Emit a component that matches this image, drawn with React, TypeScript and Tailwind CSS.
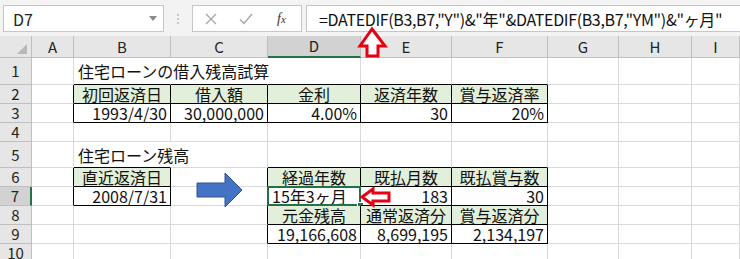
import React from "react";

const font = "font-[family-name:'Noto_Sans_CJK_JP',sans-serif]";

type Cell = { text: string; align?: "left" | "right" | "center"; fill?: boolean };

const cells: Record<string, Cell> = {
  "1,2": { text: "住宅ローンの借入残高試算", align: "left" },
  "2,2": { text: "初回返済日", align: "center", fill: true },
  "2,3": { text: "借入額", align: "center", fill: true },
  "2,4": { text: "金利", align: "center", fill: true },
  "2,5": { text: "返済年数", align: "center", fill: true },
  "2,6": { text: "賞与返済率", align: "center", fill: true },
  "3,2": { text: "1993/4/30", align: "right" },
  "3,3": { text: "30,000,000", align: "right" },
  "3,4": { text: "4.00%", align: "right" },
  "3,5": { text: "30", align: "right" },
  "3,6": { text: "20%", align: "right" },
  "5,2": { text: "住宅ローン残高", align: "left" },
  "6,2": { text: "直近返済日", align: "center", fill: true },
  "7,2": { text: "2008/7/31", align: "right" },
  "6,4": { text: "経過年数", align: "center", fill: true },
  "6,5": { text: "既払月数", align: "center", fill: true },
  "6,6": { text: "既払賞与数", align: "center", fill: true },
  "7,4": { text: "15年3ヶ月", align: "left" },
  "7,5": { text: "183", align: "right" },
  "7,6": { text: "30", align: "right" },
  "8,4": { text: "元金残高", align: "center", fill: true },
  "8,5": { text: "通常返済分", align: "center", fill: true },
  "8,6": { text: "賞与返済分", align: "center", fill: true },
  "9,4": { text: "19,166,608", align: "right" },
  "9,5": { text: "8,699,195", align: "right" },
  "9,6": { text: "2,134,197", align: "right" },
};

// cells that carry a black "all borders" box
const boxed = (r: number, c: number) =>
  (r >= 2 && r <= 3 && c >= 2 && c <= 6) ||
  (r >= 6 && r <= 7 && c === 2) ||
  (r >= 6 && r <= 9 && c >= 4 && c <= 6);

// text that spills over into the next column hides the gridline
const spill = (r: number, c: number) => (r === 1 && (c === 2 || c === 3)) || (r === 5 && c === 2);

const colLetters = ["A", "B", "C", "D", "E", "F", "G", "H", "I"];
const rows = [1, 2, 3, 4, 5, 6, 7, 8, 9, 10];

const gridCols = "grid grid-cols-[32px_42px_97px_97px_93px_91px_96px_71px_73px_1fr]";

function FormulaBar() {
  return (
    <div className="h-[36px] bg-[#f3f3f3] flex items-start pt-[5px] pl-[3px] gap-0">
      <div className="w-[161px] h-[27px] bg-white border border-[#c6c6c6] flex items-center pl-[9px] pr-[6px]">
        <span className={`${font} text-[16px] leading-[18px] text-[#222] flex-1`}>D7</span>
        <svg width="8" height="5" viewBox="0 0 8 5">
          <path d="M0 0 L8 0 L4 5 Z" fill="#8a8a8a" />
        </svg>
      </div>
      <div className="w-[28px] h-[27px] flex flex-col items-center justify-center gap-[2px]">
        <div className="w-[2px] h-[2px] bg-[#c8c8c8]" />
        <div className="w-[2px] h-[2px] bg-[#c8c8c8]" />
        <div className="w-[2px] h-[2px] bg-[#c8c8c8]" />
      </div>
      <div className="w-[110px] h-[27px] bg-white border border-[#c6c6c6] flex items-center">
        <svg width="12" height="12" viewBox="0 0 12 12" className="ml-[12px]">
          <path d="M1 1 L11 11 M11 1 L1 11" stroke="#a6a6a6" strokeWidth="1.3" />
        </svg>
        <svg width="14" height="12" viewBox="0 0 14 12" className="ml-[22px]">
          <path d="M1 6.5 L5 10.5 L13 1" stroke="#a6a6a6" strokeWidth="1.4" fill="none" />
        </svg>
        <span className="ml-[24px] font-[family-name:'Liberation_Serif',serif] italic text-[14px] text-[#333] leading-none">
          f<span className="text-[11px]">x</span>
        </span>
      </div>
      <div className="ml-[4px] flex-1 h-[27px] bg-white border border-[#c6c6c6] border-r-0 flex items-center pl-[12px]">
        <span className={`${font} text-[16px] leading-[18px] tracking-[-0.35px] text-[#111] whitespace-nowrap`}>
          {'=DATEDIF(B3,B7,"Y")&"年"&DATEDIF(B3,B7,"YM")&"ヶ月"'}
        </span>
      </div>
    </div>
  );
}

function HeaderRow() {
  return (
    <div className={`${gridCols} h-[22px] bg-[#e6e6e6]`}>
      <div className="border-r border-b border-[#bfbfbf] relative">
        <svg width="10" height="10" viewBox="0 0 10 10" className="absolute right-[4px] bottom-[3px]">
          <path d="M10 0 L10 10 L0 10 Z" fill="#b8b8b8" />
        </svg>
      </div>
      {colLetters.map((l) => (
        <div
          key={l}
          className={
            l === "D"
              ? `bg-[#d2d2d2] border-r border-[#bfbfbf] border-b-2 border-b-[#217346] flex items-center justify-center ${font} text-[15px] leading-[18px] text-[#222]`
              : `border-r border-b border-[#bfbfbf] flex items-center justify-center ${font} text-[15px] leading-[18px] text-[#222]`
          }
        >
          {l}
        </div>
      ))}
    </div>
  );
}

function SheetCell({ r, c }: { r: number; c: number }) {
  const cell = cells[`${r},${c}`];
  const rightBlack = boxed(r, c) || boxed(r, c + 1);
  const bottomBlack = boxed(r, c) || boxed(r + 1, c);
  const right = rightBlack ? "border-r-black" : spill(r, c) ? "border-r-transparent" : "border-r-[#d9d9d9]";
  const bottom = bottomBlack ? "border-b-black" : "border-b-[#d9d9d9]";
  const align =
    cell?.align === "right" ? "justify-end pr-[3px]" : cell?.align === "center" ? "justify-center" : "justify-start pl-[4px]";
  const selected = r === 7 && c === 4;
  return (
    <div
      className={`relative border-r border-b ${right} ${bottom} ${cell?.fill ? "bg-[#e2efda]" : ""} flex items-center ${align} ${font} text-[16px] leading-[18px] text-[#111]`}
    >
      {cell && <span className="block h-[18px] whitespace-nowrap">{cell.text}</span>}
      {selected && (
        <>
          <div className="absolute -left-[1px] -top-[1px] -right-[1px] -bottom-[1px] border-2 border-[#217346]" />
          <div className="absolute -right-[4px] -bottom-[4px] w-[7px] h-[7px] bg-[#217346] border border-white" />
        </>
      )}
    </div>
  );
}

function Sheet() {
  return (
    <div className={`${gridCols} grid-rows-[27px_19px_19px_19px_26px_19px_19px_19px_19px_19px]`}>
      {rows.map((r) => (
        <React.Fragment key={r}>
          <div
            className={
              r === 7
                ? `bg-[#d2d2d2] border-b border-[#bfbfbf] border-r-2 border-r-[#217346] flex items-center justify-center ${font} text-[15px] leading-[18px] text-[#222]`
                : `bg-[#e6e6e6] border-r border-b border-[#bfbfbf] flex items-center justify-center ${font} text-[15px] leading-[18px] text-[#222]`
            }
          >
            {r}
          </div>
          {colLetters.map((_, i) => (
            <SheetCell key={i} r={r} c={i + 1} />
          ))}
        </React.Fragment>
      ))}
    </div>
  );
}

export default function App() {
  return (
    <div className="w-[740px] h-[259px] overflow-hidden bg-white relative">
      <FormulaBar />
      <HeaderRow />
      <Sheet />

      {/* red outline arrow pointing at the formula */}
      <svg width="34" height="34" viewBox="0 0 34 34" className="absolute left-[356px] top-[26px]">
        <path d="M16 3 L29 20 L22 20 L22 30 L11 30 L11 20 L4 20 Z" fill="white" stroke="#e60012" strokeWidth="3" strokeLinejoin="miter" />
      </svg>

      {/* blue block arrow */}
      <svg width="48" height="36" viewBox="0 0 48 36" className="absolute left-[196px] top-[172px]">
        <path d="M1 11 L29 11 L29 1 L46 18 L29 35 L29 25 L1 25 Z" fill="#4472c4" stroke="#2f528f" strokeWidth="1" />
      </svg>

      {/* red outline arrow pointing at D7 */}
      <svg width="34" height="22" viewBox="0 0 34 22" className="absolute left-[359px] top-[186px]">
        <path d="M3 11 L14 3 L14 7 L30 7 L30 15 L14 15 L14 19 Z" fill="white" stroke="#e60012" strokeWidth="3" />
      </svg>
    </div>
  );
}
